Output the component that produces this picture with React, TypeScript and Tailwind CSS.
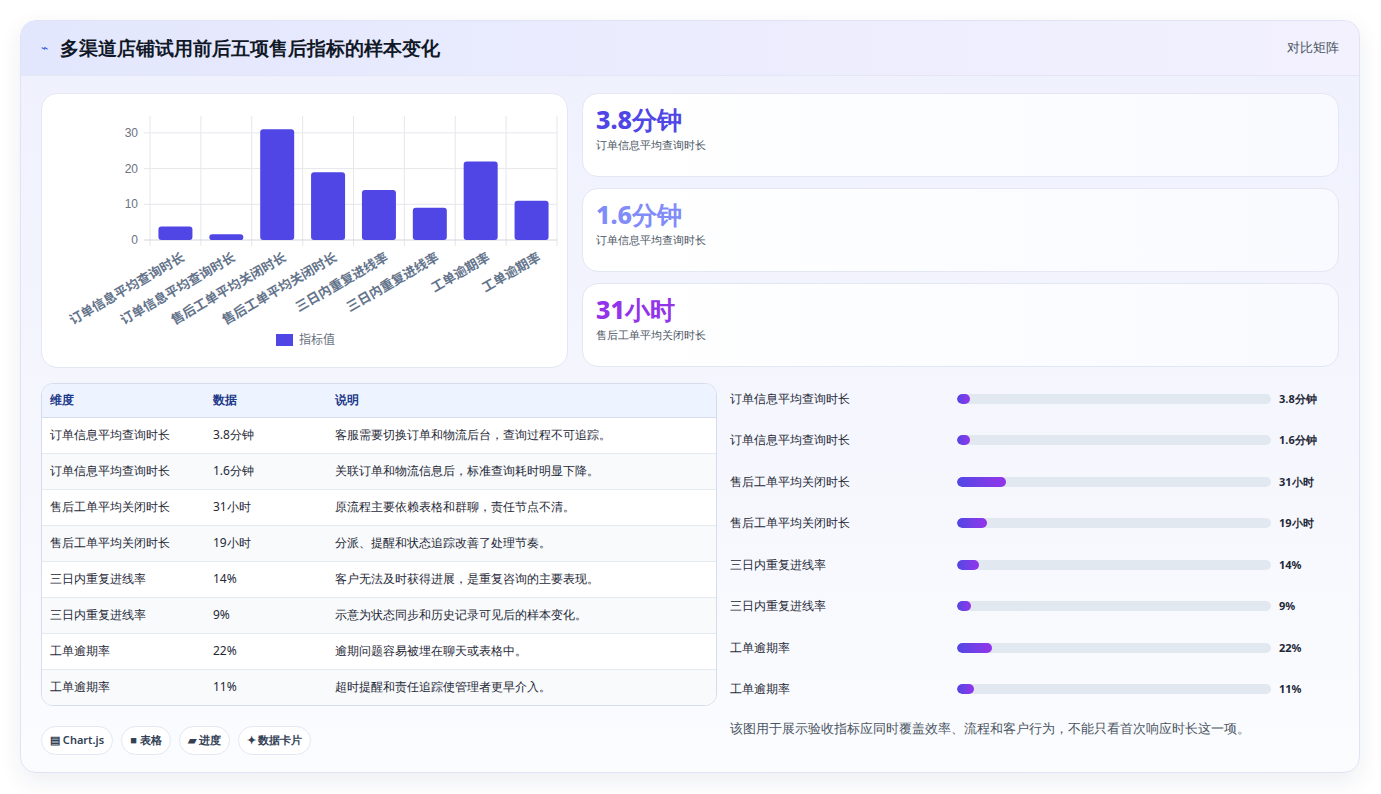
import React from 'react'

const rows = [
  { name: '订单信息平均查询时长', value: '3.8分钟', v: 3.8, note: '客服需要切换订单和物流后台，查询过程不可追踪。' },
  { name: '订单信息平均查询时长', value: '1.6分钟', v: 1.6, note: '关联订单和物流信息后，标准查询耗时明显下降。' },
  { name: '售后工单平均关闭时长', value: '31小时', v: 31, note: '原流程主要依赖表格和群聊，责任节点不清。' },
  { name: '售后工单平均关闭时长', value: '19小时', v: 19, note: '分派、提醒和状态追踪改善了处理节奏。' },
  { name: '三日内重复进线率', value: '14%', v: 14, note: '客户无法及时获得进展，是重复咨询的主要表现。' },
  { name: '三日内重复进线率', value: '9%', v: 9, note: '示意为状态同步和历史记录可见后的样本变化。' },
  { name: '工单逾期率', value: '22%', v: 22, note: '逾期问题容易被埋在聊天或表格中。' },
  { name: '工单逾期率', value: '11%', v: 11, note: '超时提醒和责任追踪使管理者更早介入。' },
]

const kpis = [
  { value: '3.8分钟', label: '订单信息平均查询时长', color: 'text-[#4f46e5]' },
  { value: '1.6分钟', label: '订单信息平均查询时长', color: 'text-[#818cf8]' },
  { value: '31小时', label: '售后工单平均关闭时长', color: 'text-[#9333ea]' },
]

function Chart() {
  const x0 = 108
  const x1 = 515
  const yBase = 146
  const unit = 3.57
  const col = (x1 - x0) / 8
  return (
    <svg width="527" height="275" viewBox="0 0 527 275" className="block">
      {Array.from({ length: 9 }).map((_, i) => (
        <line key={'v' + i} x1={x0 + i * col} x2={x0 + i * col} y1={22} y2={152} stroke="#e5e7eb" />
      ))}
      {[0, 10, 20, 30].map((t) => (
        <g key={t}>
          <line x1={x0 - 6} x2={x1} y1={yBase - t * unit} y2={yBase - t * unit} stroke={t === 0 ? '#d1d5db' : '#e5e7eb'} />
          <text x={x0 - 12} y={yBase - t * unit + 4} textAnchor="end" fontSize="12" fill="#6b7280" fontFamily="'Liberation Sans', sans-serif">{t}</text>
        </g>
      ))}
      {rows.map((r, i) => {
        const h = r.v * unit
        const cx = x0 + i * col + col / 2
        return (
          <g key={i}>
            <rect x={cx - 17} y={yBase - h} width={34} height={h} rx={3} fill="#4f46e5" />
            <text
              transform={`translate(${cx + 10},${yBase + 20}) rotate(-30)`}
              textAnchor="end"
              fontSize="13"
              fontWeight="600"
              fill="#64748b"
              fontFamily="'Noto Sans CJK SC', sans-serif"
            >
              {r.name}
            </text>
          </g>
        )
      })}
      <rect x={234} y={240} width={17} height={12} fill="#4f46e5" />
      <text x={257} y={250} fontSize="12" fill="#6b7280" fontFamily="'Noto Sans CJK SC', sans-serif">指标值</text>
    </svg>
  )
}

export default function App() {
  return (
    <div className="min-h-screen bg-white p-5 font-['Inter','Noto_Sans_CJK_SC',sans-serif]">
      <div className="w-[1340px] h-[753px] rounded-2xl border border-[#dfe3f5] bg-gradient-to-b from-[#eef0fd] to-[#fbfcfe] shadow-[0_8px_24px_rgba(30,41,90,0.08)] overflow-hidden">
        <div className="h-[55px] flex items-center justify-between px-5 border-b border-[#e3e7f5] bg-gradient-to-r from-[#e3e7fd] to-[#f3f1fe]">
          <div className="flex items-center gap-3">
            <span className="text-[#3b5bdb] text-xs">⌁</span>
            <h1 className="text-[19px] font-bold text-[#111827]">多渠道店铺试用前后五项售后指标的样本变化</h1>
          </div>
          <span className="text-[13px] text-[#4b5563]">对比矩阵</span>
        </div>
        <div className="px-5 pt-[17px]">
          <div className="flex gap-[14px]">
            <div className="w-[527px] h-[275px] rounded-2xl border border-[#e3e7f3] bg-white">
              <Chart />
            </div>
            <div className="flex-1 flex flex-col gap-[11px]">
              {kpis.map((k, i) => (
                <div key={i} className="h-[84px] rounded-2xl border border-[#e3e7f3] bg-gradient-to-r from-white to-[#f8faff] px-[13px] pt-[8px]">
                  <div className={`text-[25px] font-extrabold leading-[34px] ${k.color}`}>{k.value}</div>
                  <div className="text-[11px] text-[#4b5563] mt-[1px]">{k.label}</div>
                </div>
              ))}
            </div>
          </div>
          <div className="flex gap-[13px] mt-[15px]">
            <div className="w-[676px]">
              <div className="rounded-xl border border-[#d6dcec] overflow-hidden bg-white">
                <table className="w-full text-[12px] text-left">
                  <thead>
                    <tr className="bg-[#eef4ff] h-[33px] text-[#1e3a8a] font-bold border-b border-[#d6dcec]">
                      <th className="pl-2 w-[171px] font-bold">维度</th>
                      <th className="w-[122px] font-bold">数据</th>
                      <th className="font-bold">说明</th>
                    </tr>
                  </thead>
                  <tbody>
                    {rows.map((r, i) => (
                      <tr key={i} className={`h-[36px] text-[#1f2937] ${i < 7 ? 'border-b border-[#e5e9f2]' : ''} ${i % 2 ? 'bg-[#f8fafc]' : 'bg-white'}`}>
                        <td className="pl-2">{r.name}</td>
                        <td>{r.value}</td>
                        <td>{r.note}</td>
                      </tr>
                    ))}
                  </tbody>
                </table>
              </div>
              <div className="flex gap-2 mt-[20px]">
                {['▤ Chart.js', '■ 表格', '▰ 进度', '✦ 数据卡片'].map((c) => (
                  <span key={c} className="h-[29px] px-2 flex items-center rounded-full border border-[#e3e7f3] bg-white text-[11px] font-semibold text-[#334155]">{c}</span>
                ))}
              </div>
            </div>
            <div className="flex-1 pr-[10px] -mt-[5px]">
              {rows.map((r, i) => (
                <div key={i} className="h-[41.5px] flex items-center">
                  <div className="w-[227px] text-[12px] text-[#1f2937]">{r.name}</div>
                  <div className="w-[314px] h-[10px] rounded-full bg-[#e2e8f0] overflow-hidden">
                    <div className="h-full rounded-full bg-gradient-to-r from-[#4f46e5] to-[#9333ea]" style={{ width: `${Math.max(4, r.v / 2)}%` }} />
                  </div>
                  <div className="ml-2 text-[11px] font-bold text-[#1f2937]">{r.value}</div>
                </div>
              ))}
              <p className="mt-[10px] text-[12.5px] text-[#4b5563]">该图用于展示验收指标应同时覆盖效率、流程和客户行为，不能只看首次响应时长这一项。</p>
            </div>
          </div>
        </div>
      </div>
    </div>
  )
}
